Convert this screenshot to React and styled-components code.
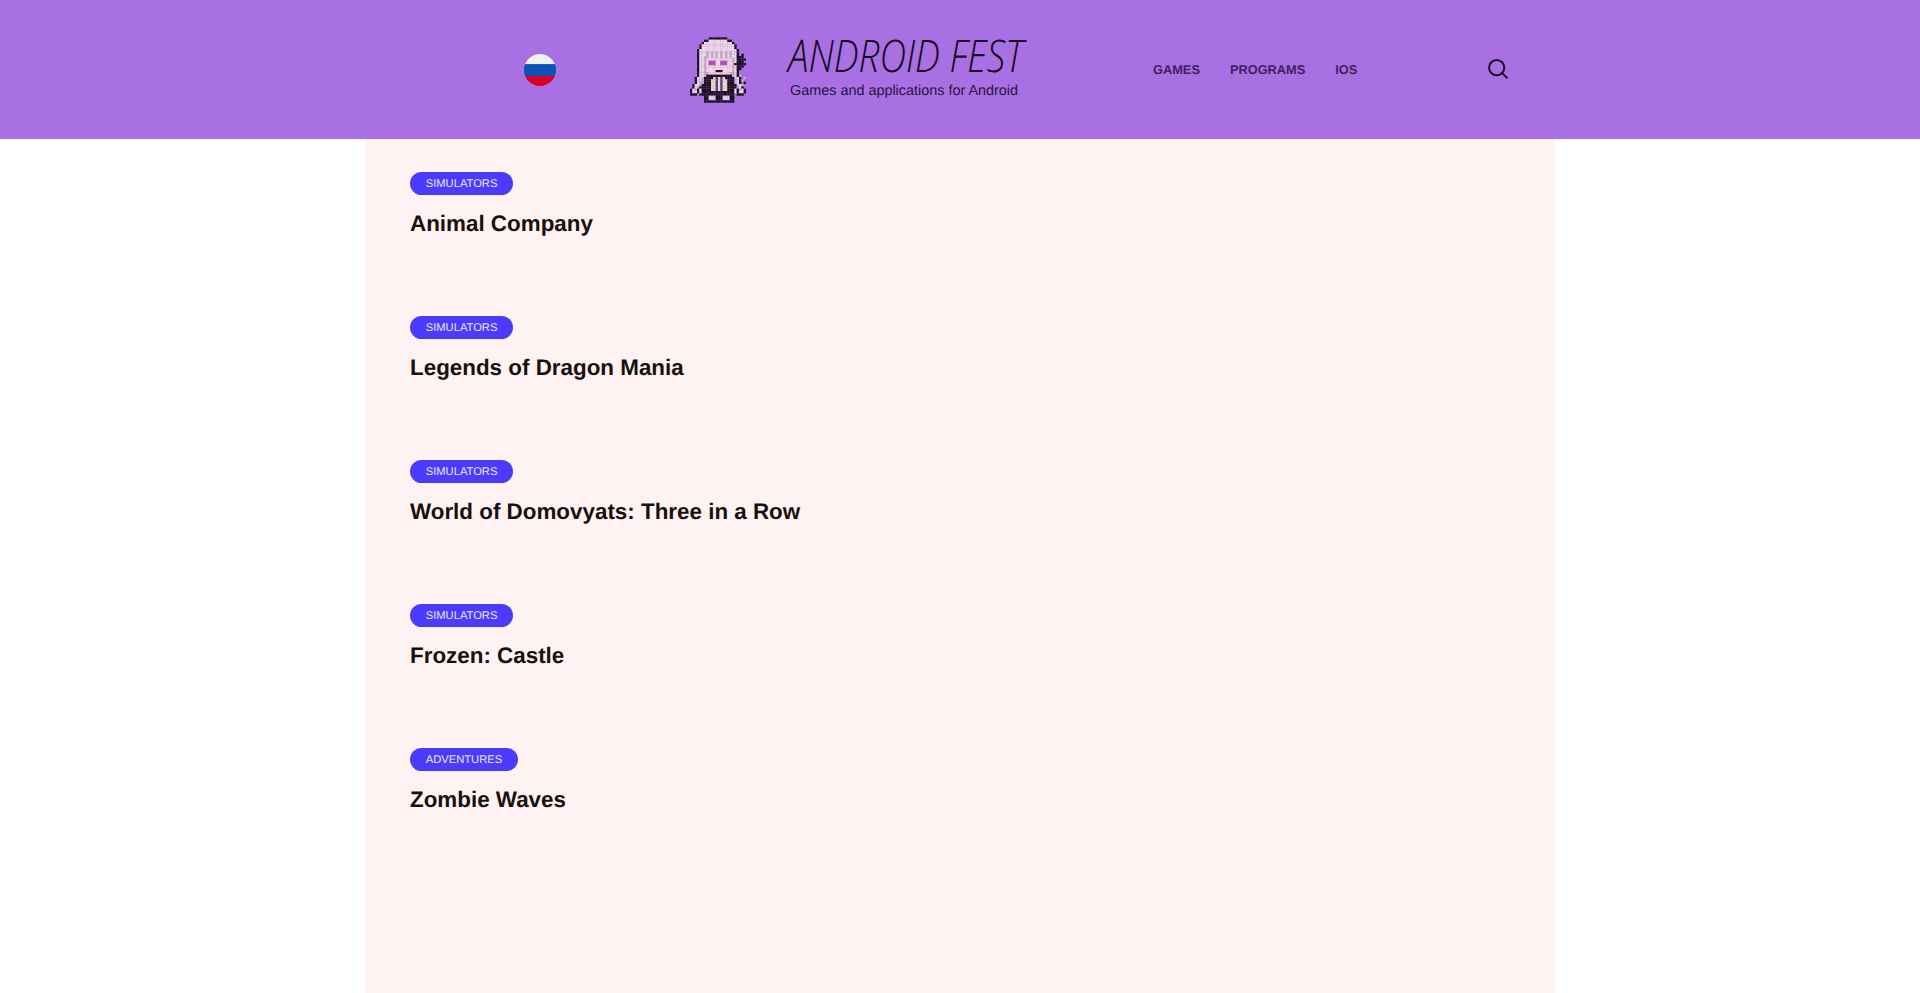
import styled, { createGlobalStyle } from "styled-components"

const posts = [
  { id: 1, category: "Simulators", title: "Animal Company" },
  { id: 2, category: "Simulators", title: "Legends of Dragon Mania" },
  { id: 3, category: "Simulators", title: "World of Domovyats: Three in a Row" },
  { id: 4, category: "Simulators", title: "Frozen: Castle" },
  { id: 5, category: "Adventures", title: "Zombie Waves" },
]

const links = ["Games", "Programs", "iOS"]

const spriteColors = {
  K: "#1c1022",
  W: "#ead9e2",
  G: "#c4aec8",
  P: "#f8d8dc",
  V: "#a652c0",
  C: "#eedcb0",
  D: "#5a4660",
  L: "#dccbec",
}

const sprite = [
  "........KKKKKKKK........",
  "......KKWWWWWWWWKK......",
  ".....KWWWWWWWWWWWWK.....",
  "....KWWWWWWWWWWWWWWK....",
  "....KWWWWWWWWWWWWWWK....",
  "...KWWWWWWWWWWWWWWWWK...",
  "...KWWWGWGWGWGWGWGWWK...",
  "...KWWWGWGWGWGWGWGWWK.K.",
  "...KWWGGWGWGWGWGWGWWKKK.",
  "...KWWGPPPPPPPPPPPGWKKKK",
  "...KWWGPVVVPPVVVPPGWKKK.",
  "...KWWGPVVVPPVVVPPGKKKKK",
  "...KWWGPPPPPPPPPPPGWKKK.",
  "...KWWGPPPPPPPPPPPGWKK..",
  "...KWWGPPPPKKKPPPPGWK...",
  "...KWWGGPPPPPPPPPGGWK...",
  "...KWWGKKKKKKKKKKKGWKG..",
  "..KWWGKKKKCDCDCKKKKGWK.G",
  "..KWWGKKKCWDWDWCKKKGWKG.",
  "..KWGGKKKCWDWDWCKKKGWK.K",
  ".KWWGKKKKCWDWDWCKKKKGWG.",
  ".KWGKKKKKCWDWDWCKKKKGWK.",
  "KWGKWKKKKCWDWDWCKKKWKGWK",
  "KWWKWKKKKKKKKKKKKKKWKWWK",
  "KKK.KKKKKKKKKKKKKKK.KKK.",
  "......KKLLLKKKLLLKK.....",
  "......KKLLLKKKLLLKK.....",
  "......KKKKKKKKKKKKK.....",
]

const App = () => {
  return (
    <>
      <GlobalStyle />
      <Header>
        <HeaderInner>
          <Flag aria-label="Русский" />
          <Brand>
            <Sprite viewBox="0 0 24 28" aria-hidden="true">
              {sprite.map((row, y) =>
                row.split("").map((cell, x) =>
                  spriteColors[cell] ? (
                    <rect key={`${x}-${y}`} x={x} y={y} width="1.02" height="1.02" fill={spriteColors[cell]} />
                  ) : null
                )
              )}
            </Sprite>
            <BrandText>
              <SiteName>ANDROID FEST</SiteName>
              <Tagline>Games and applications for Android</Tagline>
            </BrandText>
          </Brand>
          <Nav>
            {links.map((link) => (
              <NavLink key={link} href="#">{link}</NavLink>
            ))}
          </Nav>
          <SearchButton aria-label="Search">
            <svg width="20" height="20" viewBox="0 0 20 20" fill="none" stroke="#1c1022" strokeWidth="2" strokeLinecap="round">
              <circle cx="8.7" cy="8.7" r="7.6" />
              <path d="M14.4 14.4l4.6 4.4" />
            </svg>
          </SearchButton>
        </HeaderInner>
      </Header>
      <Main>
        {posts.map((post) => (
          <Post key={post.id}>
            <Badge href="#">{post.category}</Badge>
            <PostTitle>{post.title}</PostTitle>
          </Post>
        ))}
      </Main>
    </>
  )
}

const GlobalStyle = createGlobalStyle`
  * {
    box-sizing: border-box;
  }
  html, body {
    margin: 0;
    height: 100%;
    overflow: hidden;
    background: #fff;
    font-family: "Liberation Sans", Arial, sans-serif;
    text-rendering: geometricPrecision;
  }
`

const Header = styled.header`
  height: 139px;
  background-color: #a970e3;
`

const HeaderInner = styled.div`
  display: grid;
  grid-template-columns: 166px 463px 335px 20px;
  align-items: center;
  width: 1190px;
  height: 100%;
  margin: 0 auto;
  padding-left: 159px;
`

const Flag = styled.div`
  width: 32px;
  height: 32px;
  border-radius: 50%;
  background: linear-gradient(#f1f1f1 0 31%, #0b52b6 33% 67%, #d80027 69%);
`

const Brand = styled.div`
  display: flex;
  align-items: center;
  column-gap: 44px;
`

const Sprite = styled.svg`
  display: block;
  flex: none;
  width: 56px;
  height: 66px;
  margin-top: 1px;
`

const BrandText = styled.div`
  display: flex;
  flex-direction: column;
  row-gap: 9px;
  margin-top: -1px;
`

const SiteName = styled.span`
  margin-left: -2px;
  font-family: "Open Sans", sans-serif;
  font-size: 45px;
  font-style: italic;
  font-weight: 300;
  line-height: 34px;
  white-space: nowrap;
  color: #15091c;
  transform: scaleX(0.82);
  transform-origin: left center;
`

const Tagline = styled.span`
  font-size: 14.4px;
  line-height: 18px;
  white-space: nowrap;
  color: #2a1340;
`

const Nav = styled.nav`
  display: flex;
  align-items: center;
  column-gap: 30px;
`

const NavLink = styled.a`
  font-size: 12.8px;
  font-weight: 700;
  text-decoration: none;
  text-transform: uppercase;
  color: #3f2160;
`

const SearchButton = styled.button`
  display: block;
  width: 20px;
  height: 20px;
  margin-top: -1px;
  padding: 0;
  border: 0;
  background: none;
  svg {
    display: block;
  }
`

const Main = styled.main`
  display: flex;
  flex-direction: column;
  row-gap: 144px;
  width: 1190px;
  height: 854px;
  margin: 0 auto;
  padding: 33px 45px 0;
  background-color: #fff2f2;
`

const Post = styled.article`
  display: flex;
  flex-direction: column;
  align-items: flex-start;
  height: 0;
`

const Badge = styled.a`
  display: block;
  height: 23px;
  padding: 0 15.7px;
  border-radius: 12px;
  font-size: 11.2px;
  line-height: 24px;
  text-decoration: none;
  text-transform: uppercase;
  white-space: nowrap;
  background-color: #4d3bfb;
  color: #ebe8ff;
`

const PostTitle = styled.h2`
  margin: 15px 0 0;
  font-size: 22.4px;
  font-weight: 700;
  line-height: 28px;
  white-space: nowrap;
  color: #17100f;
`

export default App
